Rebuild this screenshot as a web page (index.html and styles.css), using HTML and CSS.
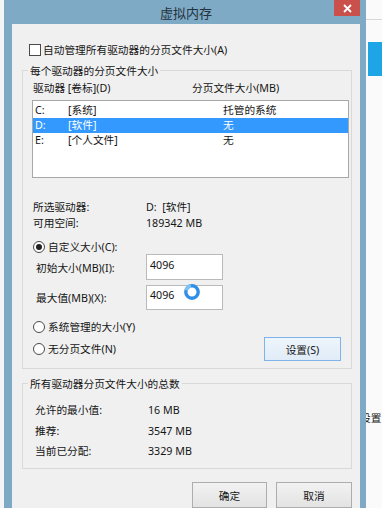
FILE: index.html
```html
<!DOCTYPE html>
<html lang="zh-CN">
<head>
<meta charset="utf-8">
<title>虚拟内存</title>
<link rel="stylesheet" href="styles.css">
</head>
<body>
<div class="desk">
  <div class="bg-left"></div>
  <div class="dialog">
    <div class="titlebar">
      <span class="title">虚拟内存</span>
      <span class="close"><svg width="9" height="9" viewBox="0 0 9 9"><path d="M1 1L8 8M8 1L1 8" stroke="#fff" stroke-width="1.8" fill="none"/></svg></span>
    </div>
    <div class="content">
      <div class="check-row"><span class="checkbox"></span><span>自动管理所有驱动器的分页文件大小(A)</span></div>

      <div class="group g1">
        <div class="group-title">每个驱动器的分页文件大小</div>
        <div class="list-head"><span>驱动器 [卷标](D)</span><span>分页文件大小(MB)</span></div>
        <div class="listbox">
          <div class="lrow"><span>C:</span><span>[系统]</span><span>托管的系统</span></div>
          <div class="lrow sel"><span>D:</span><span>[软件]</span><span>无</span></div>
          <div class="lrow"><span>E:</span><span>[个人文件]</span><span>无</span></div>
        </div>
        <div class="info">
          <div class="kv"><span>所选驱动器:</span><span>D:&nbsp; [软件]</span></div>
          <div class="kv"><span>可用空间:</span><span>189342 MB</span></div>
        </div>
        <div class="radio-row r-custom"><span class="radio on"></span><span>自定义大小(C):</span></div>
        <div class="field-row"><span class="field-label">初始大小(MB)(I):</span><span class="textbox">4096</span></div>
        <div class="field-row r2"><span class="field-label">最大值(MB)(X):</span><span class="textbox">4096<svg class="busy" width="18" height="18" viewBox="0 0 18 18"><circle cx="9" cy="9" r="6.2" stroke="#2f8fe6" stroke-width="3.4" fill="none"/><path d="M3 7.2A6.2 6.2 0 0 1 8 2.9" stroke="#7cc0f4" stroke-width="3.4" fill="none"/></svg></span></div>
        <div class="radio-row r-sys"><span class="radio"></span><span>系统管理的大小(Y)</span></div>
        <div class="radio-btn-row">
          <div class="radio-row"><span class="radio"></span><span>无分页文件(N)</span></div>
          <button class="btn btn-hover">设置(S)</button>
        </div>
      </div>

      <div class="group g2">
        <div class="group-title">所有驱动器分页文件大小的总数</div>
        <div class="totals">
          <div class="kv"><span>允许的最小值:</span><span>16 MB</span></div>
          <div class="kv"><span>推荐:</span><span>3547 MB</span></div>
          <div class="kv"><span>当前已分配:</span><span>3329 MB</span></div>
        </div>
      </div>

      <div class="footer">
        <button class="btn ok">确定</button>
        <button class="btn cancel">取消</button>
      </div>
    </div>
  </div>
  <div class="bg-right">
    <div class="rline"></div>
    <div class="tile"></div>
    <div class="rtext">设置</div>
  </div>
</div>
</body>
</html>
```
FILE: styles.css
```css
* { box-sizing: border-box; }
html, body { margin: 0; padding: 0; }
body {
  width: 382px;
  height: 508px;
  overflow: hidden;
  background: #fafafa;
  font-family: "Noto Sans", "Noto Sans CJK SC", sans-serif;
  font-size: 10.7px;
  color: #151515;
}
.desk { display: flex; height: 508px; }
.bg-left { width: 4px; flex: none; background: #f3f5f7; }
.dialog {
  width: 362px;
  flex: none;
  background: #7eaac6;
  display: flex;
  flex-direction: column;
  padding: 0 6px 0 8px;
}
.titlebar {
  height: 24px;
  flex: none;
  display: grid;
  grid-template-columns: 1fr auto 1fr;
  align-items: start;
}
.title {
  grid-column: 2;
  font-family: "Noto Sans CJK SC", sans-serif;
  font-size: 13px;
  line-height: 26px;
  color: #23323c;
}
.close {
  grid-column: 3;
  justify-self: end;
  width: 26px;
  height: 16px;
  background: #c9504b;
  display: flex;
  align-items: center;
  justify-content: center;
}
.content {
  flex: 1;
  background: #f0f0f0;
  padding: 0 8px 0 10px;
}
.check-row {
  display: flex;
  align-items: center;
  gap: 2px;
  height: 14px;
  line-height: 14px;
  margin: 19px 0 0 7px;
}
.checkbox {
  width: 12px;
  height: 12px;
  border: 1px solid #4a4a4a;
  background: #fff;
}
.group {
  border: 1px solid #d9d9d9;
  padding: 0 2px 7px 9px;
}
.g1 { margin-top: 13px; }
.group-title {
  width: max-content;
  line-height: 14px;
  margin: -7px 0 0 -4px;
  padding: 0 2px;
  background: #f0f0f0;
}
.list-head {
  display: grid;
  grid-template-columns: 159px 1fr;
  line-height: 14px;
  margin-top: 3px;
  padding-left: 1px;
}
.listbox {
  margin-top: 5px;
  height: 78px;
  border: 1px solid #a8a8a8;
  background: #fff;
  padding-top: 2px;
}
.lrow {
  display: grid;
  grid-template-columns: 33px 155px 1fr;
  height: 15px;
  line-height: 15px;
  padding-left: 2px;
}
.lrow.sel { background: #3399ff; color: #fff; }
.info { margin-top: 21px; padding-left: 1px; }
.kv {
  display: grid;
  grid-template-columns: 113px 1fr;
  line-height: 16px;
}
.radio-row {
  display: flex;
  align-items: center;
  gap: 3px;
  height: 14px;
  line-height: 14px;
  padding-left: 1px;
}
.r-custom { margin-top: 9px; }
.radio {
  width: 12px;
  height: 12px;
  border-radius: 50%;
  border: 1px solid #4a4a4a;
  background: #fff;
  display: flex;
  align-items: center;
  justify-content: center;
}
.radio.on::after {
  content: "";
  width: 6px;
  height: 6px;
  border-radius: 50%;
  background: #222;
}
.field-row {
  display: flex;
  align-items: center;
  height: 26px;
  padding-left: 4px;
}
.field-label { width: 110px; }
.textbox {
  position: relative;
  width: 77px;
  height: 26px;
  border: 1px solid #bababa;
  background: #fff;
  padding: 3px 0 0 3px;
  line-height: 14px;
}
.r2 { margin-top: 5px; height: 25px; }
.r2 .textbox { height: 25px; padding-top: 2px; }
.busy { position: absolute; left: 36px; top: -3px; }
.r-sys { margin-top: 10px; }
.radio-btn-row {
  display: flex;
  align-items: center;
  justify-content: space-between;
  height: 24px;
  margin-top: 3px;
  padding-right: 8px;
}
.radio-btn-row .radio-row { padding-left: 1px; }
.btn {
  font: inherit;
  color: #151515;
  width: 77px;
  height: 24px;
  padding: 0;
  border: 1px solid #adadad;
  background: linear-gradient(#f2f2f2, #e3e3e3);
}
.btn-hover {
  border-color: #7eb4ea;
  background: linear-gradient(#eef5fc, #e0ecf8);
}
.g2 { margin-top: 14px; padding-bottom: 6.5px; }
.totals { margin-top: 9px; padding-left: 3px; }
.totals .kv { line-height: 20.5px; }
.footer {
  display: flex;
  justify-content: flex-end;
  gap: 9px;
  margin-top: 13px;
}
.footer .btn { height: 26px; }
.footer .ok { width: 75px; }
.footer .cancel { width: 76px; }
.bg-right {
  width: 16px;
  flex: none;
  overflow: hidden;
  display: flex;
  flex-direction: column;
  background: #fafafa;
}
.rline { height: 1px; background: #d8d8d8; margin-top: 19px; }
.tile { height: 34px; margin: 22px 0 0 2px; background: #1ea5e6; }
.rtext {
  margin: 335px 0 0 -6px;
  white-space: nowrap;
  line-height: 14px;
}
```
